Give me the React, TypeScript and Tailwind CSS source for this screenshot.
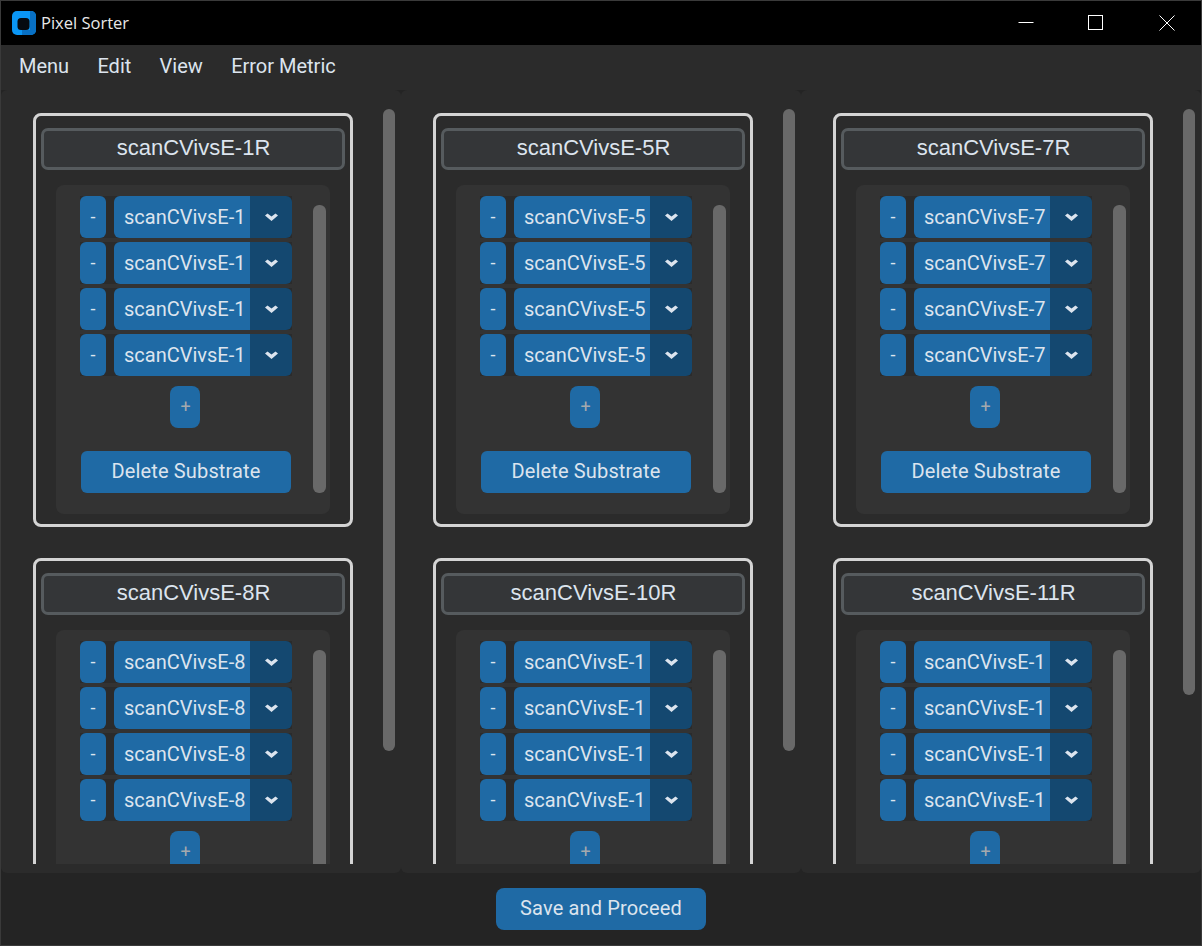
import React from "react";

const columns = [
  [
    { title: "scanCVivsE-1R", value: "scanCVivsE-1", cut: false },
    { title: "scanCVivsE-8R", value: "scanCVivsE-8", cut: true },
  ],
  [
    { title: "scanCVivsE-5R", value: "scanCVivsE-5", cut: false },
    { title: "scanCVivsE-10R", value: "scanCVivsE-1", cut: true },
  ],
  [
    { title: "scanCVivsE-7R", value: "scanCVivsE-7", cut: false },
    { title: "scanCVivsE-11R", value: "scanCVivsE-1", cut: true },
  ],
];

function Chevron() {
  return (
    <svg width="13" height="8" viewBox="0 0 13 8" className="block">
      <path d="M0 2.5 L2.5 0.5 L6.5 3.5 L10.5 0.5 L13 2.5 L6.5 8 Z" fill="#dce4ee" />
    </svg>
  );
}

function Row({ value }: { value: string }) {
  return (
    <div className="flex h-[42px] w-[212px] gap-2 bg-[#2b2b2b]">
      <button className="w-[26px] rounded-[6px] bg-[#1f6aa5] pb-[2px] text-[18px] text-[#dce4ee]">-</button>
      <div className="flex w-[178px] overflow-hidden rounded-[6px]">
        <div className="flex w-[136px] items-center bg-[#1f6aa5] pl-[10px] text-[20px] whitespace-nowrap text-[#dce4ee]">
          {value}
        </div>
        <div className="flex flex-1 items-center justify-center bg-[#144870]">
          <Chevron />
        </div>
      </div>
    </div>
  );
}

function Card({ title, value, cut }: { title: string; value: string; cut: boolean }) {
  return (
    <div className="h-[414px] w-[320px] shrink-0 rounded-[8px] border-[3px] border-[#d4d4d4] px-[5px] pt-3">
      <div className="flex h-[42px] items-center justify-center rounded-[7px] border-[3px] border-[#565b5e] bg-[#343638] pb-[4px] pl-[1px] font-['Liberation_Sans',sans-serif] text-[22px] text-[#dce4ee]">
        {title}
      </div>
      <div className="mx-[15px] mt-[15px] flex h-[329px] rounded-[8px] bg-[#333333] pt-[11px]">
        <div className="ml-[24px] flex w-[212px] flex-col">
          <div className="flex flex-col gap-1">
            <Row value={value} />
            <Row value={value} />
            <Row value={value} />
            <Row value={value} />
          </div>
          <button className="mt-[10px] ml-[90px] h-[42px] w-[30px] rounded-[8px] bg-[#1f6aa5] pb-[2px] pl-[1px] text-[18px] text-[#a3a9ae]">+</button>
          {!cut && (
            <button className="mt-[23px] ml-px h-[42px] w-[210px] rounded-[6px] bg-[#1f6aa5] pb-[2px] text-[20px] tracking-[0.15px] text-[#dce4ee]">
              Delete Substrate
            </button>
          )}
        </div>
        <div className="mt-[9px] ml-[21px] h-[288px] w-[13px] rounded-[6px] bg-[#696969]" />
      </div>
    </div>
  );
}

export default function App() {
  return (
    <div className="flex h-[946px] w-[1202px] flex-col overflow-hidden border border-[#3a3a3a] bg-[#242424] font-['Roboto',sans-serif]">
      <div className="flex h-[44px] shrink-0 items-center bg-black pl-[11px]">
        <svg width="24" height="24" viewBox="0 0 24 24" className="block">
          <rect width="24" height="24" rx="5" fill="#0a96f5" />
          <path d="M18 0 H19 A5 5 0 0 1 24 5 V19 A5 5 0 0 1 19 24 H10 V19 H18 Z" fill="#0870c4" />
          <rect x="5.5" y="7" width="12" height="12" rx="3.5" fill="#050a10" />
        </svg>
        <span className="ml-[5px] font-['Open_Sans',sans-serif] text-[16.5px] text-[#e8e8e8]">Pixel Sorter</span>
        <div className="ml-auto flex items-center">
          <svg width="16" height="16" viewBox="0 0 16 16" className="mr-[54px] block">
            <path d="M0.5 7.5 H15.5" stroke="#fff" strokeWidth="1" />
          </svg>
          <svg width="16" height="16" viewBox="0 0 16 16" className="mr-[55px] block">
            <rect x="0.5" y="0.5" width="14" height="14" fill="none" stroke="#fff" strokeWidth="1" />
          </svg>
          <svg width="16" height="16" viewBox="0 0 16 16" className="mr-[26px] block">
            <path d="M0.5 0.5 L15.5 15.5 M15.5 0.5 L0.5 15.5" stroke="#fff" strokeWidth="1" />
          </svg>
        </div>
      </div>
      <div className="flex h-[45px] shrink-0 items-center gap-[28.3px] bg-[#2b2b2b] pb-[3px] pl-[18px] text-[20px] text-[#dce4ee]">
        <span>Menu</span>
        <span>Edit</span>
        <span>View</span>
        <span>Error Metric</span>
      </div>
      <div className="flex h-[783px] shrink-0">
        {columns.map((cards, i) => (
          <div key={i} className="h-full w-[400px] rounded-[6px] bg-[#2b2b2b] pt-[19px] pl-[32px]">
            <div className="flex h-[755px] overflow-hidden">
              <div className="flex flex-col gap-[31px] pt-[4px]">
                {cards.map((c) => (
                  <Card key={c.title} title={c.title} value={c.value} cut={c.cut} />
                ))}
              </div>
              <div
                className={
                  i === 2
                    ? "ml-[30px] h-[586px] w-3 rounded-[6px] bg-[#696969]"
                    : "ml-[30px] h-[642px] w-3 rounded-[6px] bg-[#696969]"
                }
              />
            </div>
          </div>
        ))}
      </div>
      <div className="flex flex-1 justify-center pt-[15px]">
        <button className="h-[42px] w-[210px] rounded-[8px] bg-[#1f6aa5] pb-[2px] text-[20px] tracking-[0.15px] text-[#dce4ee]">
          Save and Proceed
        </button>
      </div>
    </div>
  );
}
